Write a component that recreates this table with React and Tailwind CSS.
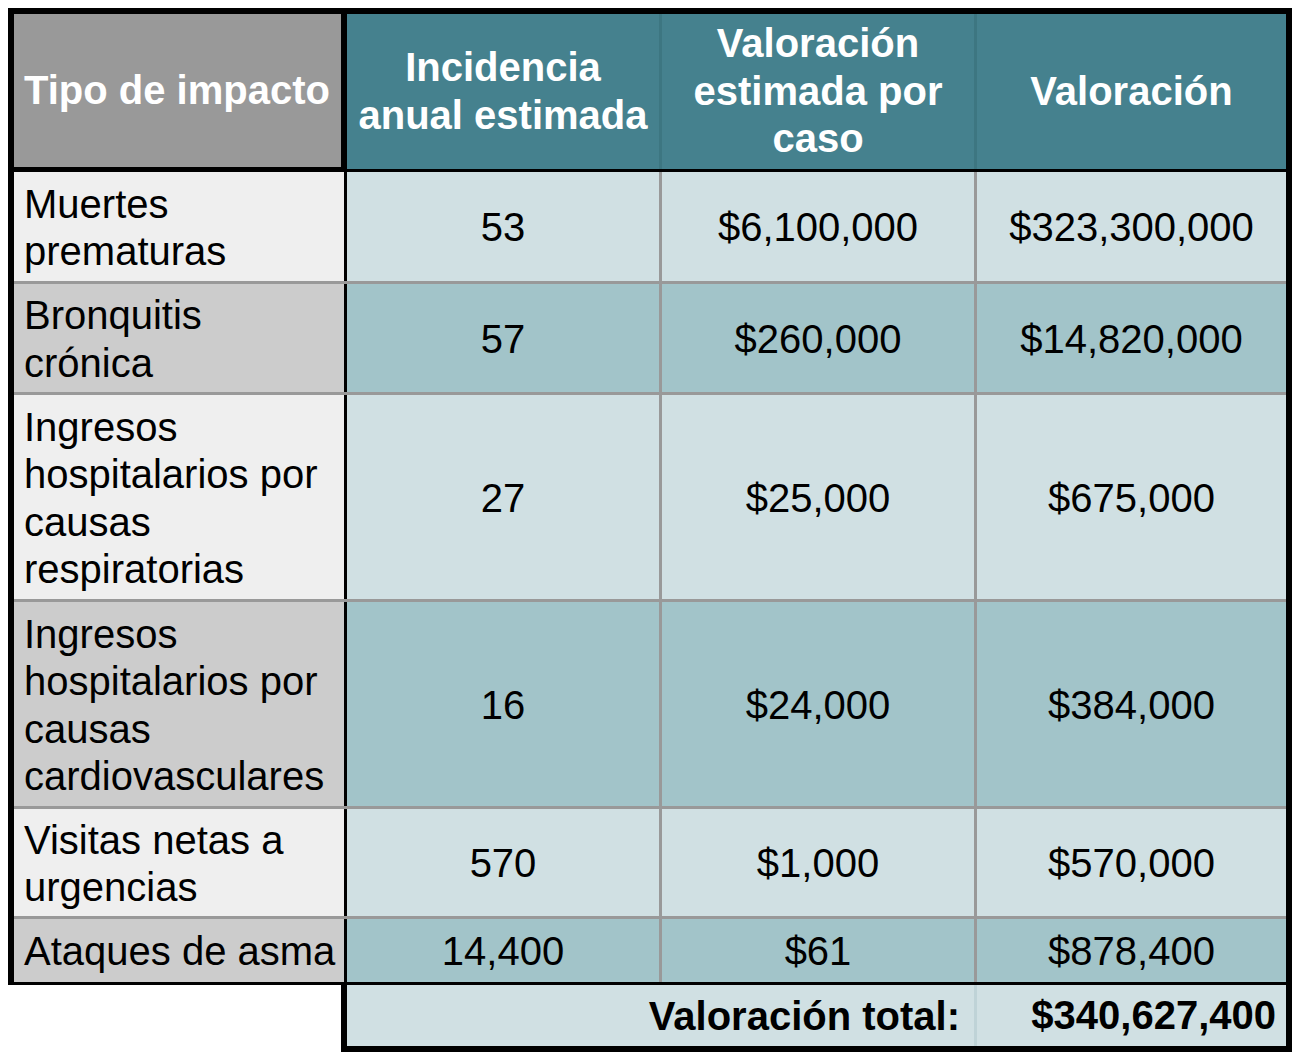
const rows = [
  { name: ['Muertes', 'prematuras'], inc: '53', per: '$6,100,000', val: '$323,300,000', h: 'h-[112px]' },
  { name: ['Bronquitis', 'crónica'], inc: '57', per: '$260,000', val: '$14,820,000', h: 'h-[111px]' },
  {
    name: ['Ingresos', 'hospitalarios por', 'causas', 'respiratorias'],
    inc: '27',
    per: '$25,000',
    val: '$675,000',
    h: 'h-[207px]',
  },
  {
    name: ['Ingresos', 'hospitalarios por', 'causas', 'cardiovasculares'],
    inc: '16',
    per: '$24,000',
    val: '$384,000',
    h: 'h-[207px]',
  },
  { name: ['Visitas netas a', 'urgencias'], inc: '570', per: '$1,000', val: '$570,000', h: 'h-[110px]' },
  { name: ['Ataques de asma'], inc: '14,400', per: '$61', val: '$878,400', h: 'h-[63px]' },
];

function Lines({ lines }) {
  return (
    <div>
      {lines.map((l, i) => (
        <div key={i} className="whitespace-nowrap">
          {l}
        </div>
      ))}
    </div>
  );
}

export default function App() {
  return (
    <div
      className="bg-white pt-2 pl-2 min-h-[1060px] text-[40px] leading-[47.5px] text-black"
      style={{ fontFamily: '"Liberation Sans", Arial, sans-serif' }}
    >
      <div className="w-[1284px] border-[6px] border-b-[3px] border-black">
        {/* header */}
        <div className="flex border-b-[3px] border-black font-bold text-white">
          <div className="w-[333px] h-[155px] bg-[#999999] border-r-[6px] border-b-2 border-black flex items-center pl-[10px]">
            <span className="whitespace-nowrap">Tipo de impacto</span>
          </div>
          <div className="w-[315px] h-[155px] bg-[#45818e] border-r-[3px] border-[#3d7681] flex items-center justify-center text-center">
            <Lines lines={['Incidencia', 'anual estimada']} />
          </div>
          <div className="w-[315px] h-[155px] bg-[#45818e] border-r-[3px] border-[#3d7681] flex items-center justify-center text-center">
            <Lines lines={['Valoración', 'estimada por', 'caso']} />
          </div>
          <div className="w-[309px] h-[155px] bg-[#45818e] flex items-center justify-center text-center">
            <Lines lines={['Valoración']} />
          </div>
        </div>

        {/* body */}
        {rows.map((r, i) => {
          const even = i % 2 === 1;
          const last = i === rows.length - 1;
          return (
            <div
              key={i}
              className={`flex ${r.h} ${last ? '' : 'border-b-[3px] border-[#999999]'}`}
            >
              <div
                className={`w-[333px] border-r-[3px] border-r-black flex items-center pl-[10px] pt-[3px] ${
                  even ? 'bg-[#cccccc]' : 'bg-[#efefef]'
                }`}
              >
                <Lines lines={r.name} />
              </div>
              <div
                className={`w-[315px] border-r-[3px] border-[#999999] flex items-center justify-center pt-[3px] ${
                  even ? 'bg-[#a2c4c9]' : 'bg-[#d0e0e3]'
                }`}
              >
                {r.inc}
              </div>
              <div
                className={`w-[315px] border-r-[3px] border-[#999999] flex items-center justify-center pt-[3px] ${
                  even ? 'bg-[#a2c4c9]' : 'bg-[#d0e0e3]'
                }`}
              >
                {r.per}
              </div>
              <div
                className={`w-[309px] flex items-center justify-center pt-[3px] ${
                  even ? 'bg-[#a2c4c9]' : 'bg-[#d0e0e3]'
                }`}
              >
                {r.val}
              </div>
            </div>
          );
        })}
      </div>

      {/* total */}
      <div className="ml-[333px] w-[951px] h-[67px] flex border-x-[6px] border-b-[6px] border-black bg-[#d0e0e3] font-bold">
        <div className="w-[630px] border-r-[3px] border-[#bfd3d7] flex items-center justify-end pr-[14px] pt-[3px] whitespace-nowrap">
          Valoración total:
        </div>
        <div className="w-[309px] flex items-center justify-end pr-[10px] pt-[1px] whitespace-nowrap">
          $340,627,400
        </div>
      </div>
    </div>
  );
}
